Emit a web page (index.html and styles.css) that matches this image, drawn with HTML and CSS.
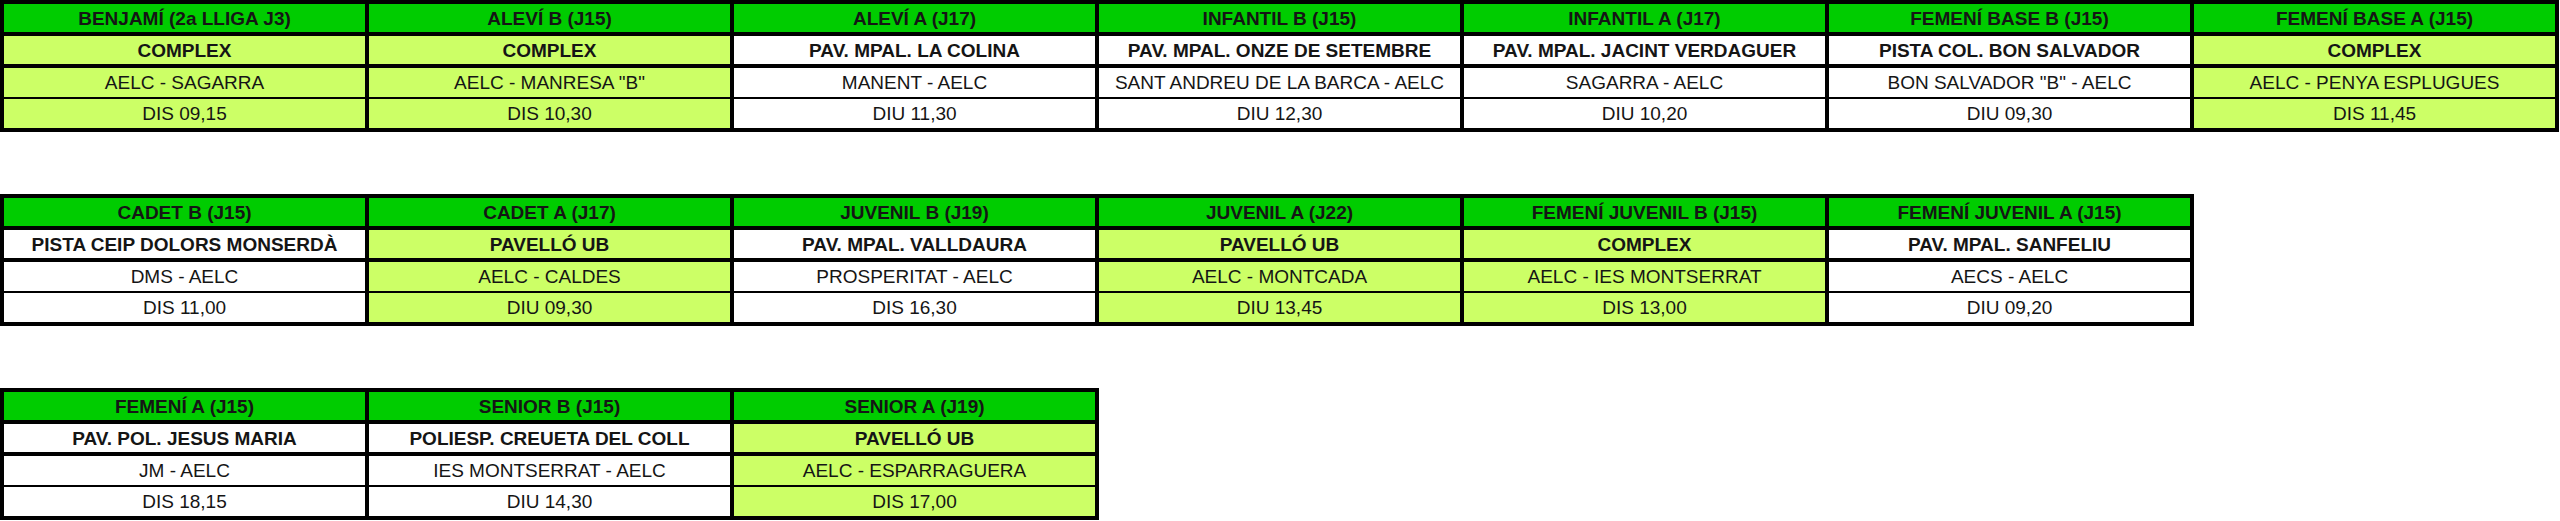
FILE: index.html
```html
<!DOCTYPE html>
<html lang="ca">
<head>
<meta charset="utf-8">
<title>Horaris</title>
<link rel="stylesheet" href="styles.css">
</head>
<body>
<main class="page">
  <section class="sched cols7">
    <div class="cell hd">BENJAMÍ (2a LLIGA J3)</div>
    <div class="cell hd">ALEVÍ B (J15)</div>
    <div class="cell hd">ALEVÍ A (J17)</div>
    <div class="cell hd">INFANTIL B (J15)</div>
    <div class="cell hd">INFANTIL A (J17)</div>
    <div class="cell hd">FEMENÍ BASE B (J15)</div>
    <div class="cell hd">FEMENÍ BASE A (J15)</div>

    <div class="cell venue lt">COMPLEX</div>
    <div class="cell venue lt">COMPLEX</div>
    <div class="cell venue">PAV. MPAL. LA COLINA</div>
    <div class="cell venue">PAV. MPAL. ONZE DE SETEMBRE</div>
    <div class="cell venue">PAV. MPAL. JACINT VERDAGUER</div>
    <div class="cell venue">PISTA COL. BON SALVADOR</div>
    <div class="cell venue lt">COMPLEX</div>

    <div class="cell match lt">AELC - SAGARRA</div>
    <div class="cell match lt">AELC - MANRESA "B"</div>
    <div class="cell match">MANENT - AELC</div>
    <div class="cell match">SANT ANDREU DE LA BARCA - AELC</div>
    <div class="cell match">SAGARRA - AELC</div>
    <div class="cell match">BON SALVADOR "B" - AELC</div>
    <div class="cell match lt">AELC - PENYA ESPLUGUES</div>

    <div class="cell time lt">DIS 09,15</div>
    <div class="cell time lt">DIS 10,30</div>
    <div class="cell time">DIU 11,30</div>
    <div class="cell time">DIU 12,30</div>
    <div class="cell time">DIU 10,20</div>
    <div class="cell time">DIU 09,30</div>
    <div class="cell time lt">DIS 11,45</div>
  </section>

  <section class="sched cols6">
    <div class="cell hd">CADET B (J15)</div>
    <div class="cell hd">CADET A (J17)</div>
    <div class="cell hd">JUVENIL B (J19)</div>
    <div class="cell hd">JUVENIL A (J22)</div>
    <div class="cell hd">FEMENÍ JUVENIL B (J15)</div>
    <div class="cell hd">FEMENÍ JUVENIL A (J15)</div>

    <div class="cell venue">PISTA CEIP DOLORS MONSERDÀ</div>
    <div class="cell venue lt">PAVELLÓ UB</div>
    <div class="cell venue">PAV. MPAL. VALLDAURA</div>
    <div class="cell venue lt">PAVELLÓ UB</div>
    <div class="cell venue lt">COMPLEX</div>
    <div class="cell venue">PAV. MPAL. SANFELIU</div>

    <div class="cell match">DMS - AELC</div>
    <div class="cell match lt">AELC - CALDES</div>
    <div class="cell match">PROSPERITAT - AELC</div>
    <div class="cell match lt">AELC - MONTCADA</div>
    <div class="cell match lt">AELC - IES MONTSERRAT</div>
    <div class="cell match">AECS - AELC</div>

    <div class="cell time">DIS 11,00</div>
    <div class="cell time lt">DIU 09,30</div>
    <div class="cell time">DIS 16,30</div>
    <div class="cell time lt">DIU 13,45</div>
    <div class="cell time lt">DIS 13,00</div>
    <div class="cell time">DIU 09,20</div>
  </section>

  <section class="sched cols3">
    <div class="cell hd">FEMENÍ A (J15)</div>
    <div class="cell hd">SENIOR B (J15)</div>
    <div class="cell hd">SENIOR A (J19)</div>

    <div class="cell venue">PAV. POL. JESUS MARIA</div>
    <div class="cell venue">POLIESP. CREUETA DEL COLL</div>
    <div class="cell venue lt">PAVELLÓ UB</div>

    <div class="cell match">JM - AELC</div>
    <div class="cell match">IES MONTSERRAT - AELC</div>
    <div class="cell match lt">AELC - ESPARRAGUERA</div>

    <div class="cell time">DIS 18,15</div>
    <div class="cell time">DIU 14,30</div>
    <div class="cell time lt">DIS 17,00</div>
  </section>
</main>
</body>
</html>
```

FILE: styles.css
```css
html, body {
  margin: 0;
  padding: 0;
  background: #ffffff;
}

.page {
  display: flex;
  flex-direction: column;
  align-items: flex-start;
  gap: 62px;
  font-family: "Liberation Sans", Arial, sans-serif;
  color: #151515;
}

.sched {
  display: grid;
  column-gap: 4px;
  padding: 4px;
  background: #000000;
}

.cols7 { grid-template-columns: repeat(7, 361px); }
.cols6 { grid-template-columns: repeat(6, 361px); }
.cols3 { grid-template-columns: repeat(3, 361px); }

.cell {
  display: flex;
  align-items: center;
  justify-content: center;
  font-size: 19px;
  white-space: nowrap;
  background: #ffffff;
  padding-top: 1px;
  box-sizing: border-box;
}

.cell.lt { background: #ccff66; }

.hd {
  height: 28px;
  margin-bottom: 4px;
  background: #00cc00;
  font-weight: bold;
}

.venue {
  height: 28px;
  margin-bottom: 4px;
  font-weight: bold;
}

.match {
  height: 29px;
  margin-bottom: 2px;
}

.time {
  height: 29px;
}
```
